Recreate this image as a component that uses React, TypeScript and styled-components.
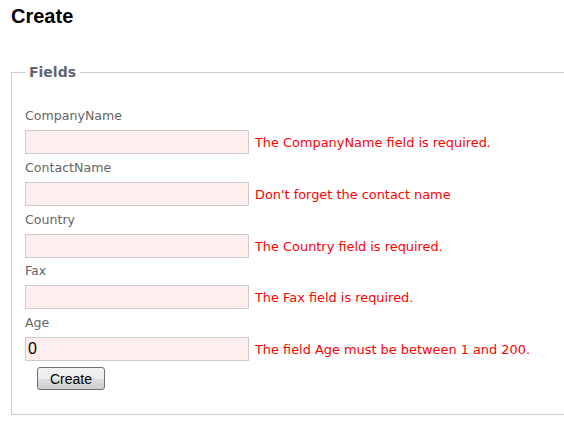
import * as React from "react"
import styled, { createGlobalStyle } from "styled-components"

const Global = createGlobalStyle`
    html, body { margin: 0; padding: 0; background: #fff; }
    body { font-family: "DejaVu Sans", Verdana, sans-serif; }
`

const Page = styled.div`
    padding: 5px 0 0 11px;
`
const Title = styled.h2`
    margin: 0;
    font-family: "Liberation Sans", Arial, sans-serif;
    font-size: 20px;
    line-height: 23px;
    font-weight: bold;
    color: #000;
`
// the right edge of the fieldset lies beyond the window in the original
const FieldSet = styled.fieldset`
    margin: 36px 0 0 0;
    padding: 27px 13px 24px 13px;
    border: 1px solid #cccccc;
    border-right: none;
    min-width: 0;
`
const Legend = styled.legend`
    padding: 0 4px;
    font-size: 14px;
    line-height: 17px;
    font-weight: bold;
    color: #5f6670;
`
const Label = styled.div<{ $first?: boolean }>`
    margin-top: ${(p) => (p.$first ? "0" : "5.75px")};
    font-size: 12.6px;
    line-height: 16px;
    color: #666666;
`
const FieldRow = styled.div`
    margin-top: 6px;
    height: 24px;
    display: flex;
    align-items: baseline;
`
const TextBox = styled.input`
    width: 224px;
    height: 24px;
    box-sizing: border-box;
    margin: 0;
    padding: 0 2px;
    border: 1px solid #cccccc;
    background: #ffeeee;
    color: #000;
    font-family: "Liberation Sans", Arial, sans-serif;
    font-size: 16px;
    outline: none;
`
const Error = styled.span`
    margin-left: 6px;
    font-size: 12.9px;
    color: #ff0000;
    white-space: nowrap;
`
const Actions = styled.div`
    display: flex;
    margin-top: 6px;
    padding-left: 12px;
`
const Button = styled.button`
    width: 68px;
    height: 23px;
    padding: 0;
    border: 1px solid #707070;
    border-radius: 3px;
    background: linear-gradient(to bottom, #f2f2f2 0%, #ebebeb 50%, #dddddd 50%, #cfcfcf 100%);
    font-family: "Liberation Sans", Arial, sans-serif;
    font-size: 14px;
    color: #000;
`

const fields = [
    { label: "CompanyName", value: "", error: "The CompanyName field is required." },
    { label: "ContactName", value: "", error: "Don't forget the contact name" },
    { label: "Country", value: "", error: "The Country field is required." },
    { label: "Fax", value: "", error: "The Fax field is required." },
    { label: "Age", value: "0", error: "The field Age must be between 1 and 200." },
]

export default function App() {
    return <Page>
        <Global />
        <Title>Create</Title>
        <FieldSet>
            <Legend>Fields</Legend>
            {fields.map((f, i) =>
                <div key={f.label}>
                    <Label $first={i === 0}>{f.label}</Label>
                    <FieldRow>
                        <TextBox defaultValue={f.value} />
                        <Error>{f.error}</Error>
                    </FieldRow>
                </div>)}
            <Actions><Button>Create</Button></Actions>
        </FieldSet>
    </Page>
}
